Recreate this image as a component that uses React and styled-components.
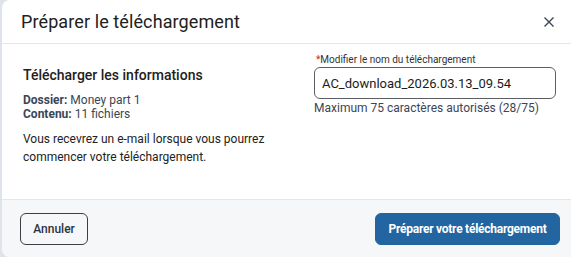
import React from "react";
import styled, { createGlobalStyle } from "styled-components";

const GlobalStyle = createGlobalStyle`
  html, body {
    margin: 0;
    padding: 0;
    width: 571px;
    height: 257px;
    overflow: hidden;
    background: #dfe4ea;
    font-family: Roboto, "Liberation Sans", Arial, sans-serif;
  }
`;

const Dialog = styled.div`
  margin-left: 2px;
  width: 569px;
  height: 257px;
  background: #fff;
  border-radius: 8px 0 0 8px;
  display: flex;
  flex-direction: column;
  overflow: hidden;
`;

const Header = styled.div`
  height: 44px;
  box-sizing: border-box;
  border-bottom: 1px solid #e3e6ea;
  display: flex;
  align-items: center;
  justify-content: space-between;
  padding: 0 0 0 19px;
`;

const Title = styled.h1`
  margin: 0;
  font-size: 18px;
  font-weight: 400;
  color: #212121;
  letter-spacing: 0.1px;
`;

const CloseBtn = styled.button`
  border: none;
  background: none;
  padding: 0;
  margin-right: 16px;
  width: 12px;
  height: 12px;
  display: flex;
  cursor: pointer;
`;

const Body = styled.div`
  flex: 1;
  display: flex;
  padding: 10px 0 0 21px;
`;

const Left = styled.div`
  width: 291px;
  padding-top: 13px;
`;

const Subtitle = styled.h2`
  margin: 0 0 10px;
  font-size: 14px;
  font-weight: 500;
  color: #212121;
`;

const Meta = styled.div`
  font-size: 12px;
  line-height: 14px;
  color: #3b4656;
  b { font-weight: 700; }
`;

const Note = styled.p`
  margin: 9px 0 0;
  font-size: 12px;
  line-height: 18px;
  color: #222;
`;

const Right = styled.div`
  display: flex;
  flex-direction: column;
  width: 242px;
`;

const Label = styled.label`
  font-size: 10px;
  line-height: 12px;
  color: #333;
  padding-left: 2px;
  margin-bottom: 1px;
  span { color: #c62828; }
`;

const Input = styled.input`
  box-sizing: border-box;
  height: 32px;
  width: 242px;
  border: 1px solid #5a5f66;
  border-radius: 6px;
  padding: 0 7px;
  font-family: inherit;
  font-size: 13px;
  color: #1c1c1c;
  outline: none;
`;

const Help = styled.div`
  font-size: 12px;
  line-height: 16px;
  color: #3b4656;
  margin-top: 1px;
`;

const Footer = styled.div`
  height: 58px;
  box-sizing: border-box;
  border-top: 1px solid #e3e6ea;
  background: #f5f7f9;
  display: flex;
  align-items: center;
  justify-content: space-between;
  padding: 0 11px 0 18px;
`;

const Button = styled.button`
  height: 32px;
  box-sizing: border-box;
  border-radius: 6px;
  font-family: inherit;
  font-size: 12px;
  cursor: pointer;
  padding: 0;
  border: 1px solid ${(p) => (p.$primary ? "#2265a0" : "#3a3f46")};
  background: ${(p) => (p.$primary ? "#2265a0" : "transparent")};
  color: ${(p) => (p.$primary ? "#fff" : "#2c333c")};
  font-weight: ${(p) => (p.$primary ? 700 : 500)};
  letter-spacing: ${(p) => (p.$primary ? "-0.25px" : "0")};
  width: ${(p) => (p.$primary ? "185px" : "68px")};
`;

export default function App() {
  return (
    <>
      <GlobalStyle />
      <Dialog>
        <Header>
          <Title>Préparer le téléchargement</Title>
          <CloseBtn aria-label="Fermer">
            <svg width="12" height="12" viewBox="0 0 12 12">
              <path d="M1.5 1.5 L10.5 10.5 M10.5 1.5 L1.5 10.5" stroke="#3b4656" strokeWidth="1.4" />
            </svg>
          </CloseBtn>
        </Header>
        <Body>
          <Left>
            <Subtitle>Télécharger les informations</Subtitle>
            <Meta>
              <b>Dossier:</b> Money part 1
            </Meta>
            <Meta>
              <b>Contenu:</b> 11 fichiers
            </Meta>
            <Note>
              Vous recevrez un e-mail lorsque vous pourrez
              <br />
              commencer votre téléchargement.
            </Note>
          </Left>
          <Right>
            <Label>
              <span>*</span>Modifier le nom du téléchargement
            </Label>
            <Input defaultValue="AC_download_2026.03.13_09.54" />
            <Help>Maximum 75 caractères autorisés (28/75)</Help>
          </Right>
        </Body>
        <Footer>
          <Button>Annuler</Button>
          <Button $primary>Préparer votre téléchargement</Button>
        </Footer>
      </Dialog>
    </>
  );
}
